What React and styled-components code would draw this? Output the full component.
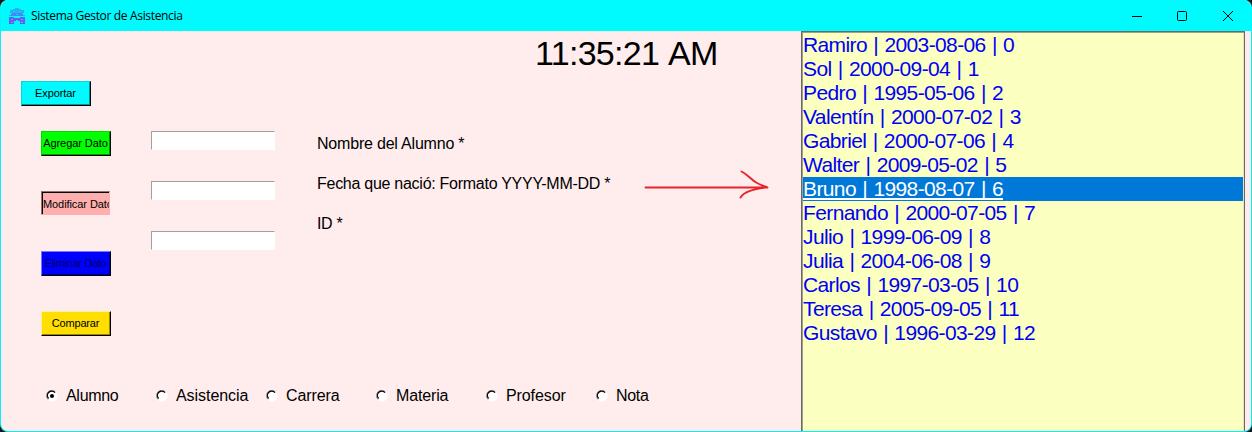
import React from 'react';
import styled, { createGlobalStyle } from 'styled-components';

const Global = createGlobalStyle`
  * { box-sizing: border-box; }
  body { margin: 0; background: #16181c; overflow: hidden; font-family: "Liberation Sans", Arial, sans-serif; color: #000; }
`;

const Window = styled.div`
  width: 1252px; height: 432px; display: flex; flex-direction: column;
  background: #ffeded; border: 1px solid #00f4fb; border-top: 0; border-radius: 8px; overflow: hidden;
`;
const TitleBar = styled.header`
  height: 31px; flex: none; display: flex; align-items: center; background: #00fbff; padding-left: 8px;
`;
const Title = styled.span`
  flex: 1; margin-left: 6px; font: 12px/16px "Open Sans", "Segoe UI", sans-serif; letter-spacing: -0.34px; white-space: nowrap;
`;
const Caption = styled.div`
  width: 46px; height: 30px; display: flex; align-items: center; justify-content: center;
  padding-right: ${p => p.$inset || 0}px;
  &:last-child { margin-right: -1px; }
`;
const Body = styled.div`flex: 1; min-height: 0; display: flex;`;
const Form = styled.main`width: 800px; flex: none; display: flex; flex-direction: column;`;
const Clock = styled.div`
  height: 50px; padding: 2px 0 0 534px; font-size: 34px; line-height: 40px; white-space: nowrap; letter-spacing: -0.7px; word-spacing: 2px;
`;
const ExportRow = styled.div`height: 50px; padding-left: 20px;`;
const Fields = styled.div`height: 255px; display: flex; padding-left: 40px;`;
const Buttons = styled.div`width: 110px; display: flex; flex-direction: column; gap: 35px;`;
const Button = styled.button`
  display: flex; align-items: center; justify-content: center; width: 70px; height: 25px; padding: 0 1px 0 0; overflow: hidden;
  font: 11px/13px "Liberation Sans", Arial, sans-serif; letter-spacing: ${p => p.$track || 0}px; white-space: nowrap; color: ${p => p.$ink || '#000'};
  background: ${p => p.$bg}; border-radius: 0; border: 1px solid #000;
  border-left-color: ${p => p.$light}; border-top-color: ${p => p.$light};
  box-shadow: inset -1px -1px ${p => p.$dark};
  ${p => p.$pressed && `
    width: 69px; height: 24px; margin-bottom: 1px; justify-content: flex-start;
    border-color: #8b7371 #ffb0ae #ffb0ae #8b7371; box-shadow: inset 1px 1px #000;
    padding: 2px 0 0 1px;
  `}
`;
const Inputs = styled.div`width: 166px; display: flex; flex-direction: column; gap: 31px;`;
const Entry = styled.input`
  width: 124px; height: 19px; padding: 0 2px; background: #fff; border: 1px solid #fff; border-left-color: #a0a0a0; border-top-color: #a0a0a0;
  border-radius: 0; outline: 0; font: 11px "Liberation Sans", sans-serif;
`;
const LabelColumn = styled.div`width: 326px; flex: none; display: flex; flex-direction: column; gap: 20px; padding-top: 3px;`;
const Label = styled.label`font-size: 16px; line-height: 20px; white-space: nowrap; letter-spacing: ${p => p.$track}px;`;
const Pointer = styled.svg`margin-top: 37px; flex: none;`;
const Radios = styled.div`display: flex; padding-left: 45px;`;
const Radio = styled.div`width: 110px; height: 20px; display: flex; align-items: center; font-size: 16px; gap: 8px; letter-spacing: ${p => p.$track || 0}px;`;
const List = styled.ul`
  width: 444px; margin: 0; padding: 1px 0 0 1px; list-style: none; background: #fbffbf;
  border: solid #696969; border-width: 1px 1px 0 1px; box-shadow: inset 1px 1px #a09f88, inset -1px 0 #e3e3c0;
`;
const Item = styled.li`
  height: 24px; margin-right: 1px; font-size: 21px; line-height: 23px; color: ${p => p.$selected ? '#fff' : '#0000f5'};
  background: ${p => p.$selected ? '#0078d7' : 'transparent'}; white-space: nowrap; letter-spacing: -0.62px; word-spacing: 1.1px;
  span { display: inline-block; height: 23px; border-bottom: ${p => p.$selected ? '2px solid #fff' : '0'}; }
`;

const items = [
  'Ramiro | 2003-08-06 | 0', 'Sol | 2000-09-04 | 1', 'Pedro | 1995-05-06 | 2', 'Valentín | 2000-07-02 | 3',
  'Gabriel | 2000-07-06 | 4', 'Walter | 2009-05-02 | 5', 'Bruno | 1998-08-07 | 6', 'Fernando | 2000-07-05 | 7',
  'Julio | 1999-06-09 | 8', 'Julia | 2004-06-08 | 9', 'Carlos | 1997-03-05 | 10', 'Teresa | 2005-09-05 | 11', 'Gustavo | 1996-03-29 | 12',
];

const tables = [['Alumno', -0.3], ['Asistencia', -0.05], ['Carrera', -0.1], ['Materia', -0.15], ['Profesor', -0.1], ['Nota', -0.3]];

const AppIcon = () => (
  <svg width="16" height="16" viewBox="0 0 16 16" shapeRendering="crispEdges">
    <path d="M6 0h4v1h2v1h3v3h-1v2h2v1H0V7h2V5H1V2h3V1h2z" fill="#2bb0ee" />
    <path d="M4 5h8v1h2v2H2V6h2z" fill="#3a8cf0" />
    <path d="M0 9h5v1h6V9h5v7h-5v-3H9v-1H7v1H5v3H0z" fill="#6a5cf5" />
    <path d="M2 11h2v1H2zM12 11h2v1h-2zM2 14h2v1H2zM12 14h2v1h-2zM7 6h2v1H7zM4 3h2v1H4zM10 3h2v1h-2z" fill="#00d8ff" />
    <path d="M5 11h6v1H5zM0 15h4v1H0zM12 15h4v1h-4z" fill="#8b45ef" />
  </svg>
);
const RadioMark = ({ on }) => (
  <svg width="12" height="12" viewBox="0 0 12 12">
    <circle cx="6" cy="6" r="5.600" fill="#fff" />
    <path d="M2 9.500A5.200 5.200 0 0 1 9.500 1.800" fill="none" stroke="#999" strokeWidth="1" />
    <path d="M2.600 8.500A4.300 4.300 0 0 1 9 2.600" fill="none" stroke="#000" strokeWidth="1.300" />
    {on && <circle cx="6" cy="6" r="2" fill="#000" />}
  </svg>
);

export default function App() {
  return (
    <>
      <Global />
      <Window>
        <TitleBar>
          <AppIcon />
          <Title>Sistema Gestor de Asistencia</Title>
          <Caption><svg width="10" height="10"><path d="M0 5.5h10" stroke="#000" /></svg></Caption>
          <Caption $inset={2}><svg width="10" height="10"><rect x=".5" y=".5" width="9" height="9" rx="1" fill="none" stroke="#000" /></svg></Caption>
          <Caption $inset={2}><svg width="10" height="10"><path d="M0 0l10 10M10 0L0 10" stroke="#000" /></svg></Caption>
        </TitleBar>
        <Body>
          <Form>
            <Clock>11:35:21 AM</Clock>
            <ExportRow><Button $bg="#00fbff" $light="#00d8dc" $dark="#009699" $track={-0.1}>Exportar</Button></ExportRow>
            <Fields>
              <Buttons>
                <Button $bg="#00ff00" $light="#00d800" $dark="#009900" $track={-0.06}>Agregar Dato</Button>
                <Button $bg="#ffb0ae" $pressed $track={-0.08}>Modificar Dato</Button>
                <Button $bg="#0000ff" $light="#7777ff" $dark="#000099" $ink="#00005a" $track={-0.35}>Eliminar Dato</Button>
                <Button $bg="#ffde00" $light="#fff09a" $dark="#998500" $track={-0.2}>Comparar</Button>
              </Buttons>
              <Inputs><Entry /><Entry /><Entry /></Inputs>
              <LabelColumn>
                <Label $track={-0.2}>Nombre del Alumno *</Label>
                <Label $track={-0.27}>Fecha que nació: Formato YYYY-MM-DD *</Label>
                <Label $track={-0.35}>ID *</Label>
              </LabelColumn>
              <Pointer width="126" height="32" fill="none" stroke="#e8232b" strokeWidth="1.9" strokeLinecap="round">
                <path d="M2.500 19.500H124.500M98.500 3.500C105 6.500 108 12 114 15C118 17 121 18.500 124 19C116 21 102 22 97.500 29.500" />
              </Pointer>
            </Fields>
            <Radios>
              {tables.map(([name, track], i) => (
                <Radio key={name} $track={track}><RadioMark on={i === 0} />{name}</Radio>
              ))}
            </Radios>
          </Form>
          <List>
            {items.map((t, i) => <Item key={t} $selected={i === 6}><span>{t}</span></Item>)}
          </List>
        </Body>
      </Window>
    </>
  );
}
